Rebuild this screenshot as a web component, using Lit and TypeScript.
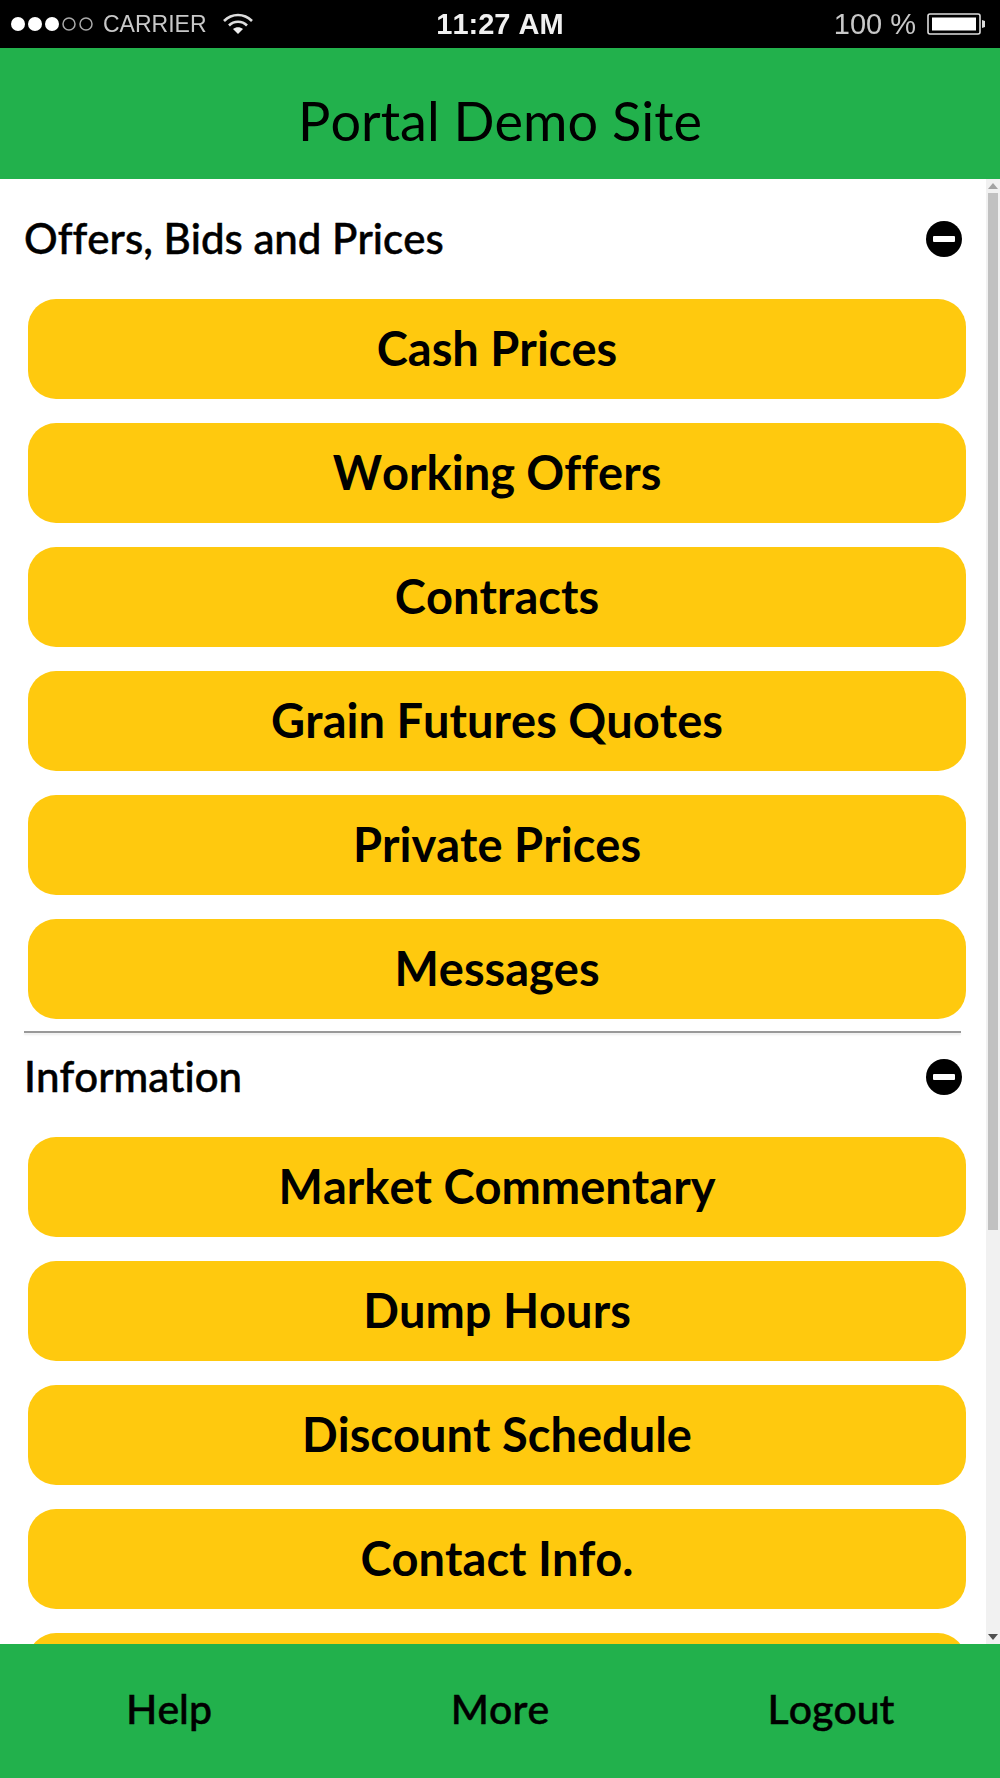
import { LitElement, html, css, svg } from "lit";
import { customElement } from "lit/decorators.js";

const OFFERS = ["Cash Prices", "Working Offers", "Contracts", "Grain Futures Quotes", "Private Prices", "Messages"];
const INFO = ["Market Commentary", "Dump Hours", "Discount Schedule", "Contact Info.", ""];

@customElement("app-root")
export class AppRoot extends LitElement {
  static styles = css`
    :host { display: block; width: 1000px; height: 1778px; font-family: Lato, "Liberation Sans", sans-serif; color: #000; background: #fff; font-variant-ligatures: none; font-kerning: none; }
    .app { display: flex; flex-direction: column; height: 1778px; overflow: hidden; }
    .status { flex: 0 0 48px; background: #000; color: #e4e4e4; display: grid; grid-template-columns: 1fr auto 1fr; align-items: center; font-family: "Liberation Sans", sans-serif; filter: blur(0.6px); }
    .s-left { display: flex; align-items: center; padding-left: 10px; }
    .dots { display: block; }
    .carrier { font-size: 23px; margin-left: 8px; color: #c8c8c8; }
    .wifi { margin-left: 16px; display: block; }
    .time { font-size: 29px; font-weight: 700; color: #f0f0f0; }
    .s-right { display: flex; align-items: center; justify-content: flex-end; padding-right: 13px; }
    .pct { font-size: 29px; color: #c8c8c8; margin-right: 11px; }
    .battery { display: block; }
    .top { flex: 0 0 131px; box-sizing: border-box; padding-top: 14px; background: #22b14c; display: flex; align-items: center; justify-content: center; font-size: 54px; font-weight: 400; }
    .main { flex: 1 1 auto; min-height: 0; display: flex; overflow: hidden; }
    .content { flex: 1 1 auto; min-width: 0; }
    .head { display: flex; align-items: center; justify-content: space-between; height: 48px; padding: 36px 24px 36px 24px; font-size: 42px; font-weight: 500; -webkit-text-stroke: 0.5px #000; }
    .head > span:first-child { position: relative; top: -1px; }
    .head.second { padding-top: 20px; padding-bottom: 36px; }
    .minus { width: 36px; height: 36px; border-radius: 50%; background: #000; display: flex; align-items: center; justify-content: center; }
    .minus i { display: block; width: 22px; height: 6px; background: #fff; border-radius: 1px; }
    .list { display: flex; flex-direction: column; gap: 24.5px; padding: 0 20px 0 28px; }
    .btn { box-sizing: border-box; height: 99.5px; padding-bottom: 2px; border-radius: 28px; background: #ffc90e; display: flex; align-items: center; justify-content: center; font-size: 47px; font-weight: 700; }
    .rule { height: 2px; margin: 12.5px 25px 0 24px; background: #999; box-shadow: 0 2px 2px rgba(0,0,0,0.08); }
    .bar { flex: 0 0 14px; background: #f1f1f1; display: flex; flex-direction: column; align-items: center; }
    .arrow { flex: 0 0 14px; display: flex; align-items: center; justify-content: center; }
    .thumb { width: 10px; height: 1037px; background: #c1c1c1; }
    .fill { flex: 1; }
    .foot { flex: 0 0 134px; box-sizing: border-box; padding: 0 3.5px 6px; background: #22b14c; display: grid; grid-template-columns: repeat(3, 1fr); align-items: center; justify-items: center; font-size: 41px; font-weight: 500; -webkit-text-stroke: 0.5px #000; }
  `;

  private arrow(up: boolean, color: string) {
    return html`<svg width="10" height="6" viewBox="0 0 10 6">${svg`<path d="${up ? "M5 0 L10 6 L0 6 Z" : "M0 0 L10 0 L5 6 Z"}" fill="${color}"/>`}</svg>`;
  }

  private head(label: string, second = false) {
    return html`<div class="head ${second ? "second" : ""}"><span>${label}</span><span class="minus"><i></i></span></div>`;
  }

  private list(items: string[]) {
    return html`<div class="list">${items.map((t) => html`<div class="btn">${t}</div>`)}</div>`;
  }

  render() {
    return html`<div class="app">
      <div class="status">
        <div class="s-left">
          <svg class="dots" width="85" height="16" viewBox="0 0 85 16">
            <circle cx="8" cy="8" r="7" fill="#fff"/><circle cx="25" cy="8" r="7" fill="#fff"/><circle cx="42" cy="8" r="7" fill="#fff"/>
            <circle cx="59" cy="8" r="6" fill="none" stroke="#aaa" stroke-width="1.5"/><circle cx="76" cy="8" r="6" fill="none" stroke="#aaa" stroke-width="1.5"/>
          </svg>
          <span class="carrier">CARRIER</span>
          <svg class="wifi" width="30" height="22" viewBox="0 0 30 22">
            <path d="M1 8 C9 0 21 0 29 8" fill="none" stroke="#ddd" stroke-width="2.6"/>
            <path d="M6 12.5 C11 7.5 19 7.5 24 12.5" fill="none" stroke="#ddd" stroke-width="2.6"/>
            <path d="M15 21 L10 16 C13 13.5 17 13.5 20 16 Z" fill="#eee"/>
          </svg>
        </div>
        <div class="time">11:27 AM</div>
        <div class="s-right">
          <span class="pct">100 %</span>
          <svg class="battery" width="60" height="22" viewBox="0 0 60 22">
            <rect x="1" y="1" width="52" height="20" rx="2" fill="none" stroke="#ddd" stroke-width="1.6"/>
            <rect x="5" y="4.5" width="44" height="13" fill="#fff"/>
            <path d="M55 7 L58 8 L58 14 L55 15 Z" fill="#ddd"/>
          </svg>
        </div>
      </div>
      <div class="top">Portal Demo Site</div>
      <div class="main">
        <div class="content">
          ${this.head("Offers, Bids and Prices")}
          ${this.list(OFFERS)}
          <div class="rule"></div>
          ${this.head("Information", true)}
          ${this.list(INFO)}
        </div>
        <div class="bar">
          <div class="arrow">${this.arrow(true, "#a3a3a3")}</div>
          <div class="thumb"></div>
          <div class="fill"></div>
          <div class="arrow">${this.arrow(false, "#505050")}</div>
        </div>
      </div>
      <div class="foot"><span>Help</span><span>More</span><span>Logout</span></div>
    </div>`;
  }
}
